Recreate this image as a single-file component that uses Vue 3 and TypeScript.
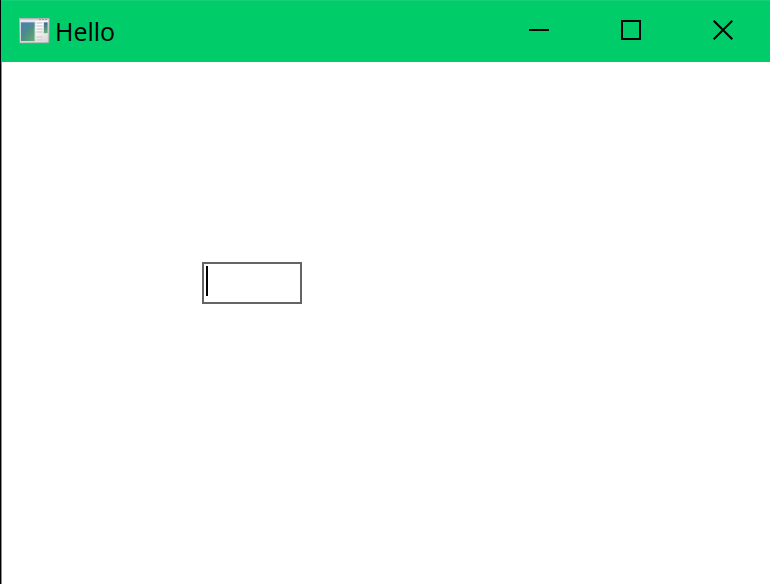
<script setup lang="ts">
import { ref } from 'vue'

const title = 'Hello'
const text = ref('')
</script>

<template>
  <div class="window">
    <header class="titlebar">
      <div class="brand">
        <svg class="app-icon" viewBox="0 0 32 28" aria-hidden="true">
          <defs>
            <linearGradient id="picture" x1="0" y1="0" x2="1" y2="1">
              <stop offset="0" stop-color="#4a78aa" />
              <stop offset="0.5" stop-color="#4b8f85" />
              <stop offset="1" stop-color="#63ad72" />
            </linearGradient>
            <linearGradient id="strip" x1="0" y1="0" x2="0" y2="1">
              <stop offset="0" stop-color="#3c6c9c" />
              <stop offset="1" stop-color="#67ad70" />
            </linearGradient>
            <linearGradient id="paper" x1="0" y1="0" x2="1" y2="1">
              <stop offset="0.5" stop-color="#fafafa" />
              <stop offset="1" stop-color="#d4d4d6" />
            </linearGradient>
            <linearGradient id="frame" x1="0" y1="0" x2="0" y2="1">
              <stop offset="0" stop-color="#b0b6ba" />
              <stop offset="1" stop-color="#8c9691" />
            </linearGradient>
          </defs>
          <rect x="1" y="1" width="30.500" height="25.500" fill="url(#frame)" />
          <rect x="2" y="2" width="28.500" height="23.500" fill="url(#paper)" />
          <rect x="2" y="2" width="28.500" height="1.500" fill="#cdd2da" />
          <path d="M21 2.500h2M24 2.500h2M27 2.500h2" stroke="#9098a4" stroke-width="1" />
          <rect x="2" y="4.500" width="15.500" height="20.500" fill="#cfd8e0" />
          <rect x="3" y="5.500" width="13.500" height="18.500" fill="url(#picture)" />
          <path d="M3 5.500H16.500V10.500C11 10.500 6 12 3 15Z" fill="#5584b4" fill-opacity="0.45" />
          <path d="M18.500 6h6M18.500 9h6M18.500 12h6M18.500 15h6M18.500 20h6M18.500 23h6" stroke="#d2d2d5" stroke-width="1.500" />
          <rect x="25.500" y="5" width="4.500" height="11.500" fill="#c6ccd2" />
          <rect x="26" y="5.500" width="3.500" height="10.500" fill="url(#strip)" />
        </svg>
        <h1 class="title">{{ title }}</h1>
      </div>
      <div class="controls">
        <button class="control" type="button" aria-label="Minimize">
          <svg class="glyph" viewBox="0 0 20 20" aria-hidden="true">
            <path d="M0 10H20" />
          </svg>
        </button>
        <button class="control" type="button" aria-label="Maximize">
          <svg class="glyph" viewBox="0 0 20 20" aria-hidden="true">
            <path d="M1 1H19V19H1Z" />
          </svg>
        </button>
        <button class="control" type="button" aria-label="Close">
          <svg class="glyph" viewBox="0 0 20 20" aria-hidden="true">
            <path d="M0.700 0.700L19.300 19.300M19.300 0.700L0.700 19.300" />
          </svg>
        </button>
      </div>
    </header>
    <main class="client">
      <div class="field">
        <input v-model="text" class="edit" type="text" aria-label="Text" />
        <span v-if="!text" class="caret"></span>
      </div>
    </main>
  </div>
</template>

<style>
body {
  margin: 0;
  background: #fff;
}
</style>

<style scoped>
.window {
  box-sizing: border-box;
  display: flex;
  flex-direction: column;
  min-height: 100vh;
  border-left: 1px solid #000;
  background: #fff;
  font-family: "Segoe UI", "Open Sans", "Noto Sans", sans-serif;
}

.titlebar {
  box-sizing: border-box;
  display: flex;
  justify-content: space-between;
  height: 62px;
  padding: 0 1px 0 17px;
  border-top: 1px solid #14d078;
  background: #00cc6a;
}

.brand {
  display: flex;
  align-items: center;
  gap: 5px;
  padding-bottom: 1px;
}

.app-icon {
  width: 32px;
  height: 28px;
}

.title {
  margin: 0;
  font-size: 25px;
  line-height: 32px;
  font-weight: 400;
  color: #000;
}

.controls {
  display: flex;
}

.control {
  display: flex;
  align-items: center;
  justify-content: center;
  width: 92px;
  padding: 0 0 3px;
  border: 0;
  background: transparent;
}

.control:hover {
  background: rgba(0, 0, 0, 0.1);
}

.glyph {
  width: 20px;
  height: 20px;
  fill: none;
  stroke: #000;
  stroke-width: 2;
}

.client {
  flex: 1;
  padding: 200px 200px 0;
  border-left: 1px solid #14d078;
}

.field {
  position: relative;
  width: 100px;
}

.edit {
  box-sizing: border-box;
  display: block;
  width: 100%;
  height: 42px;
  padding: 2px;
  border: 2px solid #646464;
  outline: none;
  background: #fff;
  font: inherit;
  font-size: 24px;
}

.caret {
  position: absolute;
  top: 4px;
  left: 4px;
  width: 2px;
  height: 30px;
  background: #000;
  pointer-events: none;
}
</style>
